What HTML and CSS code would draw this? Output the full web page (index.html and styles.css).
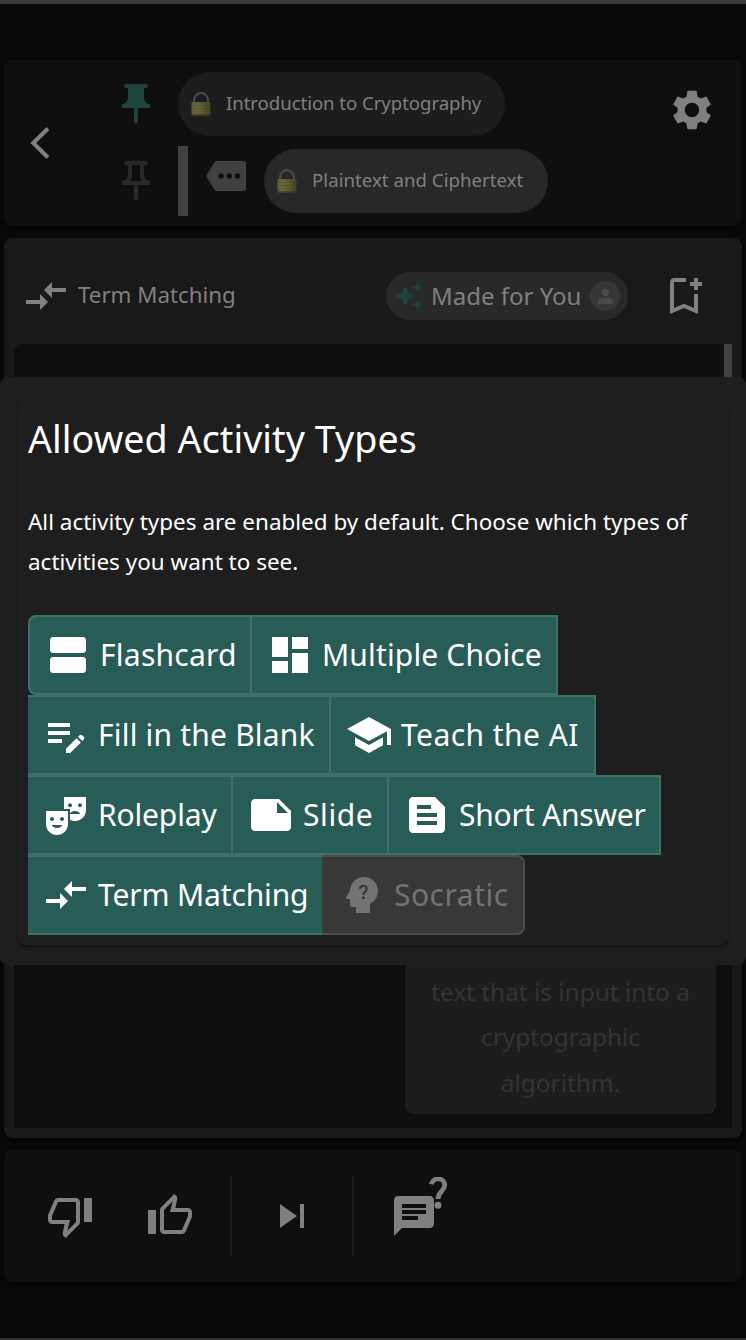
FILE: index.html
```html
<!DOCTYPE html>
<html lang="en">
<head>
<meta charset="utf-8">
<title>Allowed Activity Types</title>
<link rel="stylesheet" href="styles.css">
</head>
<body>
<svg width="0" height="0" class="defs">
  <symbol id="compare" viewBox="0 0 24 24"><path d="M9.01 14H2v2h7.01v3L13 15l-3.99-4v3zm5.98-1v-3H22V8h-7.01V5L11 9l3.99 4z"/></symbol>
  <symbol id="lock" viewBox="0 0 20 24">
    <path d="M3.1 11V8a6.9 6.9 0 0 1 13.8 0v3" fill="none" stroke="#444c59" stroke-width="2"/>
    <rect x=".5" y="10" width="19" height="13.4" rx="1" fill="url(#brass)"/>
    <path d="M1 13.5h18M1 16.5h18M1 19.5h18" stroke="#454022" stroke-width=".2"/>
    <path d="M1 22.9h18" stroke="#393317"/>
  </symbol>
  <linearGradient id="brass"><stop offset="0" stop-color="#625c36"/><stop offset=".3" stop-color="#6b663f"/><stop offset="1" stop-color="#484120"/></linearGradient>
</svg>
<div class="app">
  <header class="panel nav">
    <svg class="back" viewBox="0 0 20 32"><path d="M18 1.5 3.2 16 18 30.5"/></svg>
    <div class="trail">
      <div class="crumb">
        <svg class="icon pin pinned" viewBox="0 0 24 24"><path d="M16 9V4h1c.55 0 1-.45 1-1s-.45-1-1-1H7c-.55 0-1 .45-1 1s.45 1 1 1h1v5c0 1.66-1.34 3-3 3v2h5.97v7l1 1 1-1v-7H19v-2c-1.66 0-3-1.34-3-3z"/></svg>
        <div class="chip"><svg class="lock"><use href="#lock"/></svg><span>Introduction to Cryptography</span></div>
      </div>
      <div class="crumb child">
        <svg class="icon pin" viewBox="0 0 24 24"><path d="M14 4v5c0 1.12.37 2.16 1 3H9c.65-.86 1-1.9 1-3V4h4m3-2H7c-.55 0-1 .45-1 1s.45 1 1 1h1v5c0 1.66-1.34 3-3 3v2h5.97v7l1 1 1-1v-7H19v-2c-1.66 0-3-1.34-3-3V4h1c.55 0 1-.45 1-1s-.45-1-1-1z"/></svg>
        <i class="rail"></i>
        <svg class="tag" viewBox="0 0 40 30"><path fill-rule="evenodd" d="M11 0h26a3 3 0 0 1 3 3v24a3 3 0 0 1-3 3H11c-1 0-1.800-.5-2.400-1.300L0 15 8.600 1.300C9.200.5 10 0 11 0zM15 12.200a2.700 2.700 0 1 0 0 5.400 2.700 2.700 0 0 0 0-5.400zm8.300 0a2.700 2.700 0 1 0 0 5.400 2.700 2.700 0 0 0 0-5.400zm8.300 0a2.700 2.700 0 1 0 0 5.400 2.700 2.700 0 0 0 0-5.400z"/></svg>
        <div class="chip current"><svg class="lock"><use href="#lock"/></svg><span>Plaintext and Ciphertext</span></div>
      </div>
    </div>
    <svg class="icon gear" viewBox="0 0 24 24"><path d="M19.140 12.940c.040-.300.060-.610.060-.940 0-.320-.020-.640-.070-.940l2.030-1.580c.180-.140.230-.410.120-.610l-1.920-3.320c-.120-.220-.370-.290-.590-.220l-2.390.960c-.500-.380-1.030-.700-1.620-.940L14.400 2.810c-.040-.240-.240-.410-.480-.410h-3.840c-.240 0-.430.170-.470.410L9.250 5.350c-.590.240-1.130.570-1.620.940l-2.390-.960c-.220-.080-.470 0-.590.220L2.740 8.870c-.120.210-.080.470.120.610l2.030 1.580c-.050.300-.090.630-.090.940s.020.640.070.940l-2.030 1.580c-.180.140-.230.410-.120.610l1.920 3.320c.120.220.370.290.590.220l2.390-.960c.500.380 1.030.700 1.620.940l.360 2.540c.050.240.240.410.480.410h3.840c.240 0 .440-.170.470-.410l.360-2.540c.590-.240 1.130-.560 1.620-.940l2.390.960c.220.080.470 0 .590-.220l1.920-3.320c.120-.220.070-.470-.120-.610l-2.010-1.580zM12 15.600c-1.980 0-3.600-1.620-3.600-3.600s1.620-3.600 3.600-3.600 3.600 1.620 3.600 3.600-1.620 3.600-3.600 3.600z"/></svg>
  </header>

  <main class="panel activity">
    <div class="activity-head">
      <svg class="icon"><use href="#compare"/></svg>
      <span class="kind">Term Matching</span>
      <div class="made">
        <svg class="sparkle" viewBox="0 0 24 24"><path d="M19 9l1.250-2.750L23 5l-2.750-1.250L19 1l-1.250 2.750L15 5l2.750 1.250L19 9zm-7.500.5L9 4 6.500 9.500 1 12l5.500 2.500L9 20l2.500-5.500L17 12l-5.500-2.500zM19 15l-1.250 2.750L15 19l2.750 1.250L19 23l1.250-2.750L23 19l-2.750-1.250L19 15z"/></svg>
        <span>Made for You</span>
        <svg class="avatar" viewBox="0 0 30 30"><circle cx="15" cy="15" r="15" fill="#363636"/><g fill="#4b4b4b"><circle cx="15.300" cy="11.500" r="3.800"/><path d="M7.700 23v-2c0-2.500 5-3.900 7.600-3.900s7.600 1.400 7.600 3.900v2z"/></g></svg>
      </div>
      <svg class="icon" viewBox="0 0 24 24"><path d="M17 11v6.970l-5-2.140-5 2.140V5h6V3H7c-1.100 0-2 .9-2 2v16l7-3 7 3V11h-2zm4-4h-2v2h-2V7h-2V5h2V3h2v2h2v2z"/></svg>
    </div>
    <div class="board">
      <i class="thumb"></i>
      <div class="answer">text that is input into a cryptographic algorithm.</div>
    </div>
  </main>

  <footer class="panel tools">
    <svg class="icon" viewBox="0 0 24 24"><path d="M15 3H6c-.83 0-1.540.5-1.840 1.220l-3.020 7.050c-.09.23-.14.47-.14.73v2c0 1.100.9 2 2 2h6.310l-.95 4.570-.03.32c0 .41.17.79.44 1.060L9.830 23l6.590-6.590c.36-.36.58-.86.58-1.410V5c0-1.100-.9-2-2-2zm0 12l-4.340 4.340L12 14H3v-2l3-7h9v10zm4-12h4v12h-4V3z"/></svg>
    <svg class="icon up" viewBox="0 0 24 24"><path d="M9 21h9c.83 0 1.540-.5 1.840-1.220l3.020-7.050c.09-.23.14-.47.14-.73v-2c0-1.100-.9-2-2-2h-6.310l.95-4.570.03-.32c0-.41-.17-.79-.44-1.060L14.170 1 7.580 7.590C7.220 7.950 7 8.450 7 9v10c0 1.100.9 2 2 2zM9 9l4.340-4.340L12 10h9v2l-3 7H9V9zM1 9h4v12H1z"/></svg>
    <i class="rule"></i>
    <svg class="icon" viewBox="0 0 24 24"><path d="M6 18l8.500-6L6 6v12zM16 6v12h2V6h-2z"/></svg>
    <i class="rule"></i>
    <div class="ask">
      <svg class="icon" viewBox="0 0 24 24"><path d="M20 2H4c-1.100 0-1.990.9-1.990 2L2 22l4-4h14c1.100 0 2-.9 2-2V4c0-1.100-.9-2-2-2zM6 9h12v2H6V9zm8 5H6v-2h8v2zm4-6H6V6h12v2z"/></svg>
      <svg class="question" viewBox="0 0 18 32"><path d="M2.200 7.300C4-.2 15.700.3 15.700 8.200c0 5.500-6.700 6.500-6.700 13.800" fill="none" stroke="#808080" stroke-width="4.800"/><circle cx="9" cy="28.300" r="3.500"/></svg>
    </div>
  </footer>
</div>

<section class="dialog">
  <div class="sheet">
    <h1>Allowed Activity Types</h1>
    <p>All activity types are enabled by default. Choose which types of activities you want to see.</p>
    <div class="row">
      <button class="type first flash"><svg class="icon" viewBox="0 0 24 24"><path d="M19.500 13h-15C3.700 13 3 13.700 3 14.500v5c0 .8.700 1.500 1.500 1.500h15c.8 0 1.500-.7 1.500-1.500v-5c0-.8-.7-1.500-1.500-1.500zm0-10h-15C3.700 3 3 3.700 3 4.500v5c0 .8.700 1.500 1.500 1.500h15c.8 0 1.500-.7 1.500-1.500v-5c0-.8-.7-1.500-1.500-1.500z"/></svg><span>Flashcard</span></button>
      <button class="type multiple"><svg class="icon" viewBox="0 0 24 24"><path d="M3 13h8V3H3v10zm0 8h8v-6H3v6zm10 0h8V11h-8v10zm0-18v6h8V3h-8z"/></svg><span>Multiple Choice</span></button>
    </div>
    <div class="row">
      <button class="type fill"><svg class="icon" viewBox="0 0 24 24"><path d="M3 10h11v2H3v-2zm0-2h11V6H3v2zm0 8h7v-2H3v2zm15.010-3.130.710-.710c.390-.390 1.020-.390 1.410 0l.710.710c.390.390.390 1.020 0 1.410l-.710.710-2.120-2.120zm-.710.710-5.300 5.300V21h2.120l5.300-5.300-2.120-2.120z"/></svg><span>Fill in the Blank</span></button>
      <button class="type teach"><svg class="icon" viewBox="0 0 24 24"><path d="M5 13.180v4L12 21l7-3.820v-4L12 17l-7-3.820zM12 3L1 9l11 6 9-4.910V17h2V9L12 3z"/></svg><span>Teach the AI</span></button>
    </div>
    <div class="row">
      <button class="type role"><svg class="icon" viewBox="0 0 24 24"><path d="M2 16.500C2 19.540 4.460 22 7.500 22s5.500-2.460 5.500-5.500V10H2v6.500zm5.500 2C6.120 18.500 5 17.830 5 17h5c0 .83-1.120 1.500-2.500 1.500zM10 13c.55 0 1 .45 1 1s-.45 1-1 1-1-.45-1-1 .45-1 1-1zm-5 0c.55 0 1 .45 1 1s-.45 1-1 1-1-.45-1-1 .45-1 1-1zM11 3v6h3v2.500c0-.83 1.120-1.500 2.500-1.500s2.500.67 2.500 1.500h-5v2.890c.75.38 1.600.61 2.500.61 3.040 0 5.500-2.460 5.500-5.500V3H11zm3 5.080c-.55 0-1-.45-1-1s.45-1 1-1 1 .45 1 1-.45 1-1 1zm5 0c-.55 0-1-.45-1-1s.45-1 1-1 1 .45 1 1-.45 1-1 1z"/></svg><span>Roleplay</span></button>
      <button class="type slide"><svg class="icon" viewBox="0 0 24 24"><path d="M22 10l-6-6H4c-1.100 0-2 .9-2 2v12.010c0 1.100.9 1.990 2 1.990l16-.01c1.100 0 2-.89 2-1.990v-8zm-7-4.500l5.500 5.500H15V5.500z"/></svg><span>Slide</span></button>
      <button class="type short"><svg class="icon" viewBox="0 0 24 24"><path d="M16 3H5c-1.100 0-1.990.9-1.990 2L3 19c0 1.100.89 2 1.990 2H19c1.100 0 2-.9 2-2V8l-5-5zM7 7h7v2H7V7zm10 10H7v-2h10v2zm0-4H7v-2h10v2z"/></svg><span>Short Answer</span></button>
    </div>
    <div class="row">
      <button class="type term"><svg class="icon"><use href="#compare"/></svg><span>Term Matching</span></button>
      <button class="type socratic"><svg class="icon" viewBox="0 0 24 24"><path d="M13 3C9.250 3 6.200 5.940 6.020 9.640L4.100 13.200c-.25.33-.01.8.4.8H6v3c0 1.100.9 1 2 1h1v3h7v-4.680c2.360-1.120 4-3.530 4-6.320 0-3.870-3.130-7-7-7z"/><path d="M11 8.900c.3-2 3.400-1.800 3.400.1 0 1.300-1.700 1.400-1.700 3" fill="none" stroke="#383838" stroke-width="1.100"/><circle cx="12.700" cy="13.400" r=".75" fill="#383838"/></svg><span>Socratic</span></button>
    </div>
  </div>
</section>
</body>
</html>
```
FILE: styles.css
```css
* { box-sizing: border-box; }

body {
  margin: 0;
  position: relative;
  width: 746px;
  height: 1340px;
  overflow: hidden;
  background: #090909;
  color: #808080;
  font-family: "Noto Sans", sans-serif;
}

.defs { position: absolute; }
svg { display: block; flex: none; fill: currentColor; }
.icon { width: 48px; height: 48px; }

.app {
  height: 1340px;
  padding: 56px 4px 0;
  border-top: 4px solid #3b3b3b;
  border-bottom: 2px solid #302e2f;
  display: flex;
  flex-direction: column;
}

.panel {
  flex: none;
  border-radius: 8px;
  background: #0f0f0f;
  box-shadow: 0 3px 5px #040404;
}

.nav {
  height: 166px;
  display: flex;
  align-items: flex-start;
  padding: 12px 26px 0;
}
.back { width: 20px; height: 32px; margin-top: 55px; fill: none; stroke: #808080; stroke-width: 4; }
.trail { margin-left: 62px; flex: 1; display: flex; flex-direction: column; gap: 10px; }
.crumb { display: flex; height: 64px; align-items: center; }
.pin { color: #292929; margin-top: -1px; }
.pinned { color: #1d453e; margin: 0; }
.crumb .chip { margin-left: 18px; }
.chip {
  height: 64px;
  width: 327px;
  border-radius: 32px;
  display: flex;
  align-items: center;
  padding-left: 13px;
  gap: 15px;
  background: #1d1d1d;
  font-size: 18.600px;
  letter-spacing: -.05px;
  white-space: nowrap;
}
.chip span { padding-bottom: 3px; }
.child { height: 70px; }
.rail { width: 10px; height: 70px; margin-left: 18px; background: #414141; }
.tag { width: 40px; height: 30px; margin: -10px 0 0 18px; color: #414141; }
.child .chip { width: 284px; }
.current { background: #282828; letter-spacing: .05px; }
.lock { width: 20px; height: 24px; }
.gear { margin-top: 14px; }

.activity {
  margin-top: 12px;
  height: 900px;
  padding: 34px 10px 10px;
  background: #191919;
  display: flex;
  flex-direction: column;
}
.activity-head { display: flex; align-items: center; height: 48px; padding-left: 8px; }
.kind { width: 316px; padding: 0 0 3px 8px; font-size: 22.300px; }
.made {
  width: 242px;
  height: 48px;
  margin-right: 32px;
  padding: 0 8px;
  border-radius: 24px;
  background: #292929;
  display: flex;
  align-items: center;
  font-size: 24px;
  white-space: nowrap;
}
.made span { padding: 0 0 2px 7px; width: 166px; }
.sparkle { width: 30px; height: 30px; color: #1d453e; }
.avatar { width: 30px; height: 30px; }

.board {
  margin-top: 24px;
  height: 784px;
  border-radius: 8px 0 0 0;
  background: #0f0f0f;
  display: flex;
  flex-direction: column;
  justify-content: space-between;
  align-items: flex-end;
  padding-bottom: 14px;
}
.thumb { width: 8px; height: 80px; background: #414141; }
.answer {
  width: 311px;
  margin-right: 16px;
  padding: 18px 18px 9px;
  border-radius: 8px;
  background: #1d1d1d;
  color: #343434;
  font-size: 24.400px;
  line-height: 45.500px;
  text-align: center;
}

.tools {
  margin-top: 12px;
  height: 132px;
  padding-left: 42px;
  display: flex;
  align-items: center;
}
.up { margin-left: 52px; }
.rule { width: 2px; height: 80px; margin: 0 36px; background: #1d1d1d; }
.ask { position: relative; }
.question { position: absolute; left: 39px; top: -15px; width: 18px; height: 32px; }

.dialog {
  position: absolute;
  left: 0;
  top: 377px;
  width: 746px;
  height: 588px;
  padding: 20px 18px;
  border-radius: 8px;
  background: #1e1e1e;
  color: #fff;
}
.sheet {
  height: 548px;
  padding: 14px 10px 0;
  border-radius: 8px;
  box-shadow: 0 3px 3px -1px #121212, 0 0 2px #1b1b1b;
}
h1 { margin: 0; font-size: 37.600px; line-height: 56px; font-weight: 400; letter-spacing: .07px; }
p { margin: 35px 0 33px; font-size: 22.470px; line-height: 40px; }
.row { display: flex; height: 80px; }
.type {
  height: 80px;
  margin: 0;
  padding: 0 0 0 14px;
  border: solid #3e6f69;
  border-width: 2px 2px 2px 0;
  background: #285c56;
  color: #fff;
  font: 30px "Noto Sans", sans-serif;
  display: flex;
  align-items: center;
  gap: 8px;
  white-space: nowrap;
}
.type span { padding-bottom: 2px; }
.first { border-left-width: 2px; border-radius: 8px 0 0 8px; }
.flash { width: 224px; letter-spacing: .25px; }
.multiple { width: 306px; letter-spacing: .15px; }
.fill { width: 303px; letter-spacing: .2px; }
.teach { width: 265px; letter-spacing: .45px; }
.role { width: 205px; letter-spacing: -.15px; }
.slide { width: 156px; letter-spacing: .6px; }
.short { width: 272px; letter-spacing: -.2px; }
.term { width: 294px; border-right: 0; letter-spacing: -.15px; }
.socratic {
  width: 203px;
  padding-left: 16px;
  letter-spacing: .5px;
  border-color: #4c4c4c;
  border-radius: 0 8px 8px 0;
  background: #383838;
  color: #737373;
}
```
